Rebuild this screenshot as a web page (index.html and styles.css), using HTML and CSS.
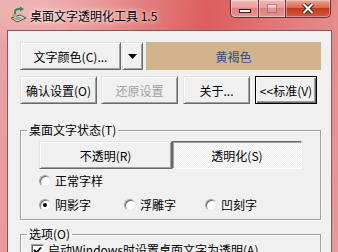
FILE: index.html
```html
<!DOCTYPE html>
<html lang="zh-CN">
<head>
    <meta charset="UTF-8">
    <title>桌面文字透明化工具 1.5</title>
    <link rel="stylesheet" href="styles.css">
</head>
<body>
    <div class="window">
        <div class="titlebar">
            <svg class="app-icon" width="17" height="17" viewBox="0 0 17 17">
                <path d="M1 12 L10 9 L16 12 L7 16 Z" fill="#e8e8e0" stroke="#4a4a40" stroke-width="1"/>
                <path d="M3 12.5 L9 10.5 L13 12.3 L7 14.5 Z" fill="#9aa890"/>
                <path d="M5 9 L5 6 Q5 3 9 3 L11 3" fill="none" stroke="#2f8a6a" stroke-width="2"/>
                <path d="M10 0.5 L14 3 L10 5.5 Z" fill="#2f8a6a"/>
                <rect x="2" y="8" width="4" height="3" fill="#e0a040"/>
            </svg>
            <span class="title">桌面文字透明化工具 1.5</span>
            <div class="caption">
                <span class="cap cap-min"><i class="glyph-min"></i></span>
                <span class="cap cap-max"><i class="glyph-max"></i></span>
                <span class="cap cap-close">
                    <svg width="12" height="11" viewBox="0 0 12 11">
                        <path d="M1.5 1 L10.5 10 M10.5 1 L1.5 10" stroke="#3a2020" stroke-width="4"/>
                        <path d="M1.5 1 L10.5 10 M10.5 1 L1.5 10" stroke="#fff" stroke-width="2"/>
                    </svg>
                </span>
            </div>
        </div>
        <div class="client">
            <div class="row">
                <button class="btn btn-color">文字颜色(C)...</button>
                <button class="btn btn-drop">
                    <svg width="9" height="5" viewBox="0 0 9 5"><path d="M0 0 H9 L4.5 5 Z" fill="#000"/></svg>
                </button>
                <div class="swatch">黄褐色</div>
            </div>
            <div class="row row-actions">
                <button class="btn btn-ok">确认设置(O)</button>
                <button class="btn btn-reset" disabled>还原设置</button>
                <button class="btn btn-about">关于...</button>
                <button class="btn btn-default">&lt;&lt;标准(V)</button>
            </div>
            <fieldset class="group group-state">
                <legend>桌面文字状态(T)</legend>
                <div class="toggles">
                    <button class="btn toggle">不透明(R)</button>
                    <button class="btn toggle toggle-on">透明化(S)</button>
                </div>
                <div class="radio-row">
                    <label class="opt"><span class="radio"></span>正常字样</label>
                </div>
                <div class="radio-row radio-row-2">
                    <label class="opt opt-1"><span class="radio radio-on"></span>阴影字</label>
                    <label class="opt opt-2"><span class="radio"></span>浮雕字</label>
                    <label class="opt"><span class="radio"></span>凹刻字</label>
                </div>
            </fieldset>
            <fieldset class="group group-opts">
                <legend>选项(O)</legend>
                <label class="opt check-opt">
                    <span class="check">
                        <svg width="9" height="9" viewBox="0 0 9 9"><path d="M1 4 L3.5 6.5 L8 1.5" fill="none" stroke="#000" stroke-width="1.8"/></svg>
                    </span>启动Windows时设置桌面文字为透明(A)
                </label>
            </fieldset>
        </div>
    </div>
</body>
</html>
```

FILE: styles.css
```css
html, body {
    margin: 0;
    padding: 0;
}
body {
    width: 338px;
    height: 252px;
    overflow: hidden;
    font: 12px "Noto Sans CJK SC", "Liberation Sans", sans-serif;
    color: #000;
}
.window {
    display: flex;
    flex-direction: column;
    width: 338px;
    height: 252px;
    background:
        radial-gradient(ellipse 90px 40px at 40px 10px, rgba(255, 255, 255, 0.25), transparent),
        linear-gradient(100deg, #eba4a4 0%, #e68e8e 30%, #dc5e5e 55%, #e07a7a 75%, #e99a9a 100%);
}
.titlebar {
    display: flex;
    align-items: flex-start;
    height: 30px;
    flex: none;
    padding-left: 10px;
}
.app-icon {
    margin-top: 6px;
    flex: none;
}
.title {
    margin-left: 3px;
    margin-top: 8px;
    line-height: 16px;
    font-size: 12px;
    text-shadow: 0 0 6px rgba(255, 255, 255, 0.9), 0 0 3px rgba(255, 255, 255, 0.8);
}
.caption {
    display: flex;
    margin-left: auto;
    margin-right: 7px;
    height: 18px;
}
.cap {
    display: flex;
    align-items: center;
    justify-content: center;
    box-sizing: border-box;
    height: 18px;
    border: 1px solid #6a3030;
    border-top: 0;
    background: linear-gradient(#f2b8b8 0%, #e89c9c 45%, #de8080 50%, #e69494 100%);
    box-shadow: inset 0 0 0 1px rgba(255, 255, 255, 0.35);
}
.cap-min {
    width: 28px;
    border-right: 0;
    border-radius: 0 0 0 5px;
}
.cap-max {
    width: 27px;
    border-right: 0;
}
.cap-close {
    width: 46px;
    border-radius: 0 0 5px 0;
    background: linear-gradient(#e8a898 0%, #d8684e 45%, #c4381e 50%, #d45a3c 100%);
}
.glyph-min {
    display: block;
    width: 10px;
    height: 2px;
    margin-top: 5px;
    background: #fff;
    border: 1px solid #3a2020;
}
.glyph-max {
    display: block;
    box-sizing: border-box;
    width: 10px;
    height: 9px;
    border: 1px solid rgba(120, 60, 60, 0.45);
    box-shadow: inset 0 2px 0 rgba(255, 255, 255, 0.5);
    background: rgba(255, 255, 255, 0.15);
}
.client {
    flex: 1;
    margin: 0 6px 0 7px;
    padding: 11px 0 0 12px;
    background: #f0f0f0;
    border: 1px solid #8a5656;
    border-bottom: 0;
    overflow: hidden;
}
.row {
    display: flex;
    height: 28px;
}
.row-actions {
    margin-top: 6px;
}
.btn {
    display: flex;
    align-items: center;
    justify-content: center;
    box-sizing: border-box;
    height: 28px;
    margin: 0;
    padding: 0;
    font: 12px "Noto Sans CJK SC", "Liberation Sans", sans-serif;
    color: #000;
    background: #f0f0f0;
    border: 1px solid;
    border-color: #e3e3e3 #696969 #696969 #e3e3e3;
    box-shadow: inset 1px 1px 0 #fff, inset -1px -1px 0 #a0a0a0;
}
.btn-color {
    width: 101px;
}
.btn-drop {
    width: 21px;
    margin-left: 1px;
}
.swatch {
    width: 175px;
    margin-left: 3px;
    background: #d2b48c;
    color: #33507a;
    display: flex;
    align-items: center;
    justify-content: center;
}
.btn-ok {
    width: 77px;
}
.btn-reset {
    width: 77px;
    margin-left: 4px;
    color: #a0a0a0;
}
.btn-about {
    width: 67px;
    margin-left: 5px;
}
.btn-default {
    width: 62px;
    margin-left: 5px;
    border-color: #000;
    box-shadow: inset 1px 1px 0 #fff, inset -1px -1px 0 #696969, inset -2px -2px 0 #a0a0a0;
}
.group {
    box-sizing: border-box;
    width: 301px;
    margin: 0;
    padding: 0 6px;
    border: 1px solid #a0a0a0;
    box-shadow: 1px 1px 0 #fff, inset 1px 1px 0 #fff;
    min-inline-size: 0;
}
.group legend {
    padding: 0 2px;
    line-height: 14px;
    height: 14px;
}
.group-state {
    margin-top: 19px;
    padding-top: 4px;
    padding-bottom: 3px;
}
.toggles {
    display: flex;
    width: 263px;
    margin-left: 12px;
}
.toggle {
    width: 133px;
}
.toggle-on {
    width: 130px;
    border-color: #696969 #fff #fff #696969;
    box-shadow: inset 1px 1px 0 #a0a0a0;
    background: repeating-conic-gradient(#fff 0 25%, #ececec 0 50%) 0 0 / 2px 2px;
}
.radio-row {
    display: flex;
    align-items: center;
    height: 22px;
    margin-top: 1px;
    margin-left: 12px;
}
.radio-row-2 {
    margin-top: 2px;
}
.opt {
    display: flex;
    align-items: center;
    line-height: 14px;
}
.opt-1 {
    width: 85px;
}
.opt-2 {
    width: 81px;
}
.radio {
    position: relative;
    box-sizing: border-box;
    width: 12px;
    height: 12px;
    margin-right: 4px;
    border-radius: 50%;
    background: #fff;
    border: 1px solid;
    border-color: #a0a0a0 #e8e8e8 #e8e8e8 #a0a0a0;
    box-shadow: inset 1px 1px 0 #696969;
}
.radio-on::after {
    content: "";
    position: absolute;
    left: 3px;
    top: 3px;
    width: 4px;
    height: 4px;
    border-radius: 50%;
    background: #000;
}
.group-opts {
    margin-top: 7px;
    padding-top: 2px;
    height: 40px;
}
.check-opt {
    margin-left: 4px;
}
.check {
    display: flex;
    align-items: center;
    justify-content: center;
    box-sizing: border-box;
    width: 13px;
    height: 13px;
    margin-right: 4px;
    background: #fff;
    border: 1px solid;
    border-color: #a0a0a0 #fff #fff #a0a0a0;
    box-shadow: inset 1px 1px 0 #696969;
}
```
